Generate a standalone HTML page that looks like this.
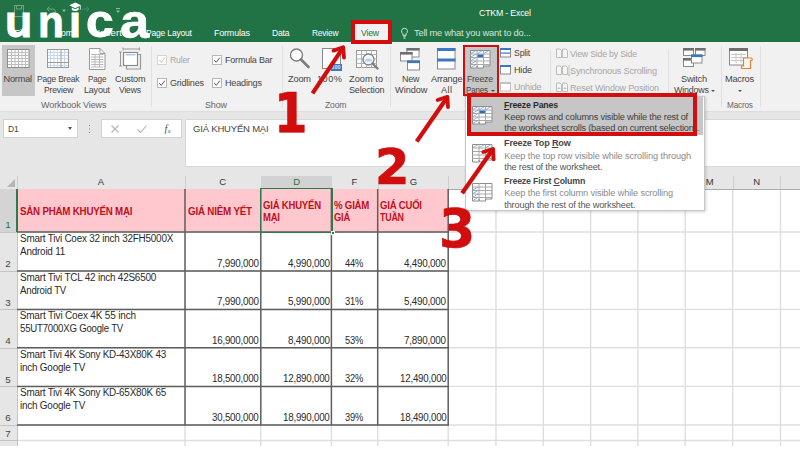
<!DOCTYPE html>
<html><head><meta charset="utf-8"><title>CTKM - Excel</title>
<style>
*{box-sizing:border-box;margin:0;padding:0}
html,body{width:800px;height:450px;overflow:hidden;background:#fff}
body{position:relative;font-family:"Liberation Sans",sans-serif;font-size:9px;color:#444}
.abs{position:absolute}
.t{position:absolute;white-space:pre}
.g{display:inline-block;position:relative;width:0;vertical-align:top;white-space:pre}
u{text-decoration:underline;text-underline-offset:1px}
#green{left:0;top:0;width:800px;height:42px;background:#217346}
#ribbon{left:0;top:42px;width:800px;height:69px;background:#f1f1f1}
#gray{left:0;top:111px;width:800px;height:335px;background:#e6e6e6}
</style></head><body>
<div class="abs" id="green"></div>
<div class="abs" id="ribbon"></div>
<div class="abs" id="gray"></div>
<!--TABS-->
<span class="t" style="left:14.0px;top:27.40px;font-size:9.5px;line-height:12px;color:#fff;letter-spacing:-0.10px;">File</span>
<span class="t" style="left:54.5px;top:27.40px;font-size:9.5px;line-height:12px;color:#fff;letter-spacing:-0.21px;transform-origin:0 50%;transform:scaleX(0.910);">Home</span>
<span class="t" style="left:97.5px;top:27.40px;font-size:9.5px;line-height:12px;color:#fff;letter-spacing:0.15px;">Insert</span>
<span class="t" style="left:146.0px;top:27.40px;font-size:9.5px;line-height:12px;color:#fff;letter-spacing:-0.21px;transform-origin:0 50%;transform:scaleX(0.897);">Page Layout</span>
<span class="t" style="left:214.0px;top:27.40px;font-size:9.5px;line-height:12px;color:#fff;letter-spacing:-0.21px;transform-origin:0 50%;transform:scaleX(0.944);">Formulas</span>
<span class="t" style="left:272.0px;top:27.40px;font-size:9.5px;line-height:12px;color:#fff;letter-spacing:-0.21px;transform-origin:0 50%;transform:scaleX(0.900);">Data</span>
<span class="t" style="left:311.5px;top:27.40px;font-size:9.5px;line-height:12px;color:#fff;letter-spacing:-0.21px;transform-origin:0 50%;transform:scaleX(0.880);">Review</span>
<div class="abs" style="left:351px;top:20px;width:41px;height:22px;background:#f1f1f1"></div>
<span class="t" style="left:360.5px;top:27.40px;font-size:9.5px;line-height:12px;color:#217346;letter-spacing:-0.21px;transform-origin:0 50%;transform:scaleX(0.914);">View</span>
<span class="t" style="left:414.0px;top:27.40px;font-size:9.5px;line-height:12px;color:#d3e5da;letter-spacing:-0.21px;transform-origin:0 50%;transform:scaleX(0.982);">Tell me what you want to do...</span>
<span class="t" style="left:479.0px;top:6.60px;font-size:9.5px;line-height:12px;color:#fff;letter-spacing:-0.21px;transform-origin:0 50%;transform:scaleX(0.924);">CTKM - Excel</span>
<svg class="abs" style="left:400px;top:27px" width="9" height="13" viewBox="0 0 9 13"><path d="M4.5 1.2a3 3 0 0 0-1.6 5.5v1.6h3.2V6.700a3 3 0 0 0-1.6-5.5zM3.200 9.800h2.600M3.600 11.200h1.800" fill="none" stroke="#e3efe8" stroke-width="0.9"/></svg>
<svg class="abs" style="left:12px;top:4px" width="112" height="16" viewBox="0 0 112 16"><g fill="none" stroke="#6fa386" stroke-width="1"><rect x="2.500" y="1.500" width="9" height="11"/><rect x="4.500" y="1.500" width="5" height="3.500"/><path d="M35 5h5.500a3 3 0 0 1 3 3v1M37.500 2.500L35 5l2.500 2.500"/><path d="M77 5h-5.500a3 3 0 0 0-3 3v1M74.500 2.500L77 5l-2.500 2.500" stroke="#4a8a66"/></g><path d="M50 5.500h4l-2 2.500zM104 4h4v1h-4zM104 6.500h4l-2 2.500z" fill="#8fb9a2"/></svg>
<!--RIBBON-->
<div class="abs" style="left:2px;top:45px;width:32.500px;height:50.500px;background:#c6c6c6"></div>
<svg class="abs" style="left:7px;top:49px;" width="23" height="19" viewBox="0 0 23 19"><rect x="0.5" y="0.5" width="21.500" height="18" fill="#fff" stroke="#8c8c8c"/><path d="M4.5 1v17M8 1v17M11.5 1v17M15 1v17M18.5 1v17" stroke="#bdbdbd" stroke-width="1" fill="none"/><path d="M1 3.5h20.500M1 6.5h20.500M1 9.5h20.500M1 12.5h20.500M1 15.5h20.500" stroke="#bdbdbd" stroke-width="1" fill="none"/></svg>
<span class="t" style="left:3.5px;top:72.60px;font-size:9.2px;line-height:12px;color:#444;letter-spacing:-0.20px;">Normal</span>
<svg class="abs" style="left:47px;top:49px;" width="22" height="19" viewBox="0 0 22 19"><rect x="0.5" y="0.5" width="21" height="18" fill="#fff" stroke="#999"/><path d="M3.5 1v17M7 1v17M10.5 1v17M17.5 1v17" stroke="#c3d8f0" stroke-width="1" fill="none"/><path d="M1 3.5h20M1 6.5h20M1 9.5h20M1 16.5h20" stroke="#c3d8f0" stroke-width="1" fill="none"/><path d="M14 1v17M1 13.500h20" stroke="#9a9a9a" stroke-width="1" fill="none"/></svg>
<span class="t" style="left:36.5px;top:72.60px;font-size:9.2px;line-height:12px;color:#444;letter-spacing:-0.20px;transform-origin:0 50%;transform:scaleX(0.920);">Page Break</span>
<span class="t" style="left:43.5px;top:84.40px;font-size:9.2px;line-height:12px;color:#444;letter-spacing:-0.20px;transform-origin:0 50%;transform:scaleX(0.937);">Preview</span>
<svg class="abs" style="left:89px;top:48px;" width="17" height="22" viewBox="0 0 17 22"><path d="M0.500 0.500h10.500l5 5v16h-15.500z" fill="#fff" stroke="#999"/><path d="M11 0.500v5h5" fill="none" stroke="#999"/><path d="M2 6.500h12.500M2 9h12.500M2 11.500h12.500M2 14h12.500M2 16.500h12.500M2 19h12.500M6 6.500v12.500M10.500 6.500v12.500" stroke="#b9b9b9" stroke-width="1" fill="none"/></svg>
<span class="t" style="left:87.5px;top:72.60px;font-size:9.2px;line-height:12px;color:#444;letter-spacing:-0.20px;transform-origin:0 50%;transform:scaleX(0.887);">Page</span>
<span class="t" style="left:84.0px;top:84.40px;font-size:9.2px;line-height:12px;color:#444;letter-spacing:-0.20px;transform-origin:0 50%;transform:scaleX(0.978);">Layout</span>
<svg class="abs" style="left:119px;top:47px;" width="23" height="23" viewBox="0 0 23 23"><path d="M4 2h16.500M4 0.500v3M20.500 0.500v3M1.500 5v14M0 5h3M0 19h3" fill="none" stroke="#999" stroke-width="1"/><path d="M19 7.500h2.500v14.500h-14v-3" fill="none" stroke="#999" stroke-width="1.200"/><rect x="4.500" y="5.500" width="14" height="13" fill="#fff" stroke="#8c8c8c" stroke-width="1.200"/><path d="M6.500 7.800h10" stroke="#9dbde0" stroke-width="1.200"/></svg>
<span class="t" style="left:115.0px;top:72.60px;font-size:9.2px;line-height:12px;color:#444;letter-spacing:-0.20px;transform-origin:0 50%;transform:scaleX(0.995);">Custom</span>
<span class="t" style="left:119.0px;top:84.40px;font-size:9.2px;line-height:12px;color:#444;letter-spacing:-0.20px;transform-origin:0 50%;transform:scaleX(0.935);">Views</span>
<span class="t" style="left:41.0px;top:99.00px;font-size:9px;line-height:12px;color:#666;letter-spacing:-0.09px;">Workbook Views</span>
<div class="abs" style="left:151px;top:46px;width:1px;height:61px;background:#e0e0e0"></div>
<svg class="abs" style="left:157px;top:54.5px;" width="10" height="10" viewBox="0 0 10 10"><rect x="0.5" y="0.5" width="9" height="9" fill="#fdfdfd" stroke="#d6d6d6"/><path d="M2.300 5.200l2 2.100l3.500-4.600" fill="none" stroke="#c4c4c4" stroke-width="1"/></svg>
<span class="t" style="left:170.0px;top:53.50px;font-size:9.2px;line-height:12px;color:#a6a6a6;letter-spacing:-0.20px;transform-origin:0 50%;transform:scaleX(0.945);">Ruler</span>
<svg class="abs" style="left:211.5px;top:54.5px;" width="10" height="10" viewBox="0 0 10 10"><rect x="0.5" y="0.5" width="9" height="9" fill="#fdfdfd" stroke="#b8b8b8"/><path d="M2.300 5.200l2 2.100l3.500-4.600" fill="none" stroke="#5a5a5a" stroke-width="1"/></svg>
<span class="t" style="left:225.0px;top:53.50px;font-size:9.2px;line-height:12px;color:#444;letter-spacing:-0.20px;transform-origin:0 50%;transform:scaleX(0.979);">Formula Bar</span>
<svg class="abs" style="left:157px;top:77.5px;" width="10" height="10" viewBox="0 0 10 10"><rect x="0.5" y="0.5" width="9" height="9" fill="#fdfdfd" stroke="#b8b8b8"/><path d="M2.300 5.200l2 2.100l3.500-4.600" fill="none" stroke="#5a5a5a" stroke-width="1"/></svg>
<span class="t" style="left:170.0px;top:76.50px;font-size:9.2px;line-height:12px;color:#444;letter-spacing:-0.20px;transform-origin:0 50%;transform:scaleX(0.981);">Gridlines</span>
<svg class="abs" style="left:211.5px;top:77.5px;" width="10" height="10" viewBox="0 0 10 10"><rect x="0.5" y="0.5" width="9" height="9" fill="#fdfdfd" stroke="#b8b8b8"/><path d="M2.300 5.200l2 2.100l3.500-4.600" fill="none" stroke="#5a5a5a" stroke-width="1"/></svg>
<span class="t" style="left:225.0px;top:76.50px;font-size:9.2px;line-height:12px;color:#444;letter-spacing:-0.20px;transform-origin:0 50%;transform:scaleX(0.989);">Headings</span>
<span class="t" style="left:205.0px;top:99.00px;font-size:9px;line-height:12px;color:#666;letter-spacing:-0.17px;">Show</span>
<div class="abs" style="left:281.5px;top:46px;width:1px;height:61px;background:#e0e0e0"></div>
<svg class="abs" style="left:288.5px;top:48px;" width="22" height="22" viewBox="0 0 22 22"><circle cx="7.500" cy="7" r="6" fill="#fdfdfd" stroke="#7d7d7d" stroke-width="1.400"/><path d="M12 11.500l7.500 7.500" stroke="#7d7d7d" stroke-width="2.600" stroke-linecap="round"/></svg>
<span class="t" style="left:288.0px;top:72.60px;font-size:9.2px;line-height:12px;color:#444;letter-spacing:-0.17px;">Zoom</span>
<svg class="abs" style="left:322px;top:47.5px;" width="21" height="24" viewBox="0 0 21 24"><rect x="0.5" y="0.5" width="18" height="20" fill="#fff" stroke="#888"/><rect x="9" y="16" width="11" height="7" fill="#3b78c3"/></svg>
<span class="t" style="left:331.5px;top:64.29px;font-size:5.5px;line-height:7px;color:#dbe7f6;font-weight:bold;letter-spacing:-0.09px;">100</span>
<span class="t" style="left:317.0px;top:72.60px;font-size:9.2px;line-height:12px;color:#444;letter-spacing:0.50px;">100%</span>
<svg class="abs" style="left:355.5px;top:49.5px;" width="23" height="21" viewBox="0 0 23 21"><rect x="0.5" y="0.5" width="20" height="17" fill="#fff" stroke="#999"/><path d="M0.500 4.500h20M0.500 9h20M0.500 13.500h20M5.500 0.500v17M10.500 0.500v17M15.500 0.500v17" stroke="#b5b5b5" fill="none"/><circle cx="12.500" cy="9.500" r="5.500" fill="#f4f8fc" stroke="#7d7d7d" stroke-width="1.300"/><path d="M9 11.500a3.500 3 0 0 1 7 0z" fill="#b7d0ec"/><path d="M16.500 13.500l5 5" stroke="#7d7d7d" stroke-width="2.300" stroke-linecap="round"/></svg>
<span class="t" style="left:349.0px;top:72.60px;font-size:9.2px;line-height:12px;color:#444;letter-spacing:0.05px;">Zoom to</span>
<span class="t" style="left:348.5px;top:84.40px;font-size:9.2px;line-height:12px;color:#444;letter-spacing:-0.20px;transform-origin:0 50%;transform:scaleX(0.981);">Selection</span>
<span class="t" style="left:324.5px;top:99.00px;font-size:9px;line-height:12px;color:#666;letter-spacing:-0.20px;transform-origin:0 50%;transform:scaleX(0.959);">Zoom</span>
<div class="abs" style="left:389.5px;top:46px;width:1px;height:61px;background:#e0e0e0"></div>
<svg class="abs" style="left:400px;top:47.5px;" width="21" height="23" viewBox="0 0 21 23"><rect x="7" y="0.5" width="12" height="8.5" fill="#fff" stroke="#8a8a8a"/><rect x="6.5" y="0" width="13" height="2.600" fill="#6e6e6e"/><rect x="0.5" y="4.5" width="11.5" height="8.5" fill="#fff" stroke="#8a8a8a"/><rect x="0" y="4" width="12.5" height="2.600" fill="#6e6e6e"/><rect x="7.5" y="13" width="12" height="9" fill="#fff" stroke="#8a8a8a"/><rect x="7" y="12.5" width="13" height="2.600" fill="#3b78c3"/></svg>
<span class="t" style="left:402.0px;top:72.60px;font-size:9.2px;line-height:12px;color:#444;letter-spacing:-0.20px;transform-origin:0 50%;transform:scaleX(0.973);">New</span>
<span class="t" style="left:395.0px;top:84.40px;font-size:9.2px;line-height:12px;color:#444;letter-spacing:-0.04px;">Window</span>
<svg class="abs" style="left:437px;top:47.5px;" width="19" height="22" viewBox="0 0 19 22"><rect x="0.5" y="0.5" width="17.500" height="20.500" fill="#fff" stroke="#8a8a8a"/><rect x="0" y="0" width="18.500" height="3" fill="#3b78c3"/><rect x="0" y="10.500" width="18.500" height="3" fill="#3b78c3"/></svg>
<span class="t" style="left:431.0px;top:72.60px;font-size:9.2px;line-height:12px;color:#444;letter-spacing:-0.20px;">Arrange</span>
<span class="t" style="left:441.0px;top:84.40px;font-size:9.2px;line-height:12px;color:#444;letter-spacing:0.39px;">All</span>
<div class="abs" style="left:463.500px;top:44.500px;width:35.500px;height:52px;background:#c6c6c6"></div>
<svg class="abs" style="left:470px;top:49.5px;" width="21" height="19" viewBox="0 0 21 19"><path d="M0.500 0.500h19.500v15.500h-6.500v2h-6v-2h-0.500v2h-6.500z" fill="#fff" stroke="#8c8c8c"/><path d="M0.500 4h19.500M0.500 7.500h19.500M0.500 11h19.500M0.500 14.500h19.500M7 0.500v17M13.500 0.500v15.500" stroke="#a9a9a9" fill="none"/><path d="M1 3.500l5-3M7.500 3.500l5-3M14 3.500l5-3" stroke="#6f9fd8" stroke-width="0.800" fill="none"/><path d="M1 7l5-3M1 10.500l5-3M1 14l5-3M1 17.500l5-3" stroke="#6f9fd8" stroke-width="0.800" fill="none"/><rect x="7.500" y="4.500" width="5.500" height="2.600" fill="#2e6fbf"/></svg>
<span class="t" style="left:467.0px;top:72.60px;font-size:9.2px;line-height:12px;color:#444;letter-spacing:-0.20px;transform-origin:0 50%;transform:scaleX(0.942);">Freeze</span>
<span class="t" style="left:466.0px;top:84.40px;font-size:9.2px;line-height:12px;color:#444;letter-spacing:-0.20px;transform-origin:0 50%;transform:scaleX(0.871);">Panes</span>
<div class="abs" style="left:490.500px;top:89.500px;border:2.300px solid transparent;border-top:2.600px solid #444;border-bottom:0"></div>
<svg class="abs" style="left:499.5px;top:48px;" width="12" height="10" viewBox="0 0 12 10"><rect x="0.5" y="0.5" width="10" height="8.500" fill="#fdfdfd" stroke="#8a8a8a"/><rect x="0" y="0" width="11" height="2" fill="#3b78c3"/><rect x="1" y="4.500" width="9" height="1.200" fill="#3b78c3"/></svg>
<span class="t" style="left:513.5px;top:47.30px;font-size:9.2px;line-height:12px;color:#444;letter-spacing:-0.20px;transform-origin:0 50%;transform:scaleX(0.949);">Split</span>
<svg class="abs" style="left:499.5px;top:65px;" width="12" height="10" viewBox="0 0 12 10"><rect x="0.5" y="0.5" width="10" height="8.500" fill="#fdfdfd" stroke="#8a8a8a"/><rect x="0" y="0" width="11" height="2" fill="#3b78c3"/></svg>
<span class="t" style="left:513.5px;top:64.20px;font-size:9.2px;line-height:12px;color:#444;letter-spacing:-0.20px;transform-origin:0 50%;transform:scaleX(0.984);">Hide</span>
<svg class="abs" style="left:499.5px;top:82px;" width="12" height="10" viewBox="0 0 12 10"><rect x="0.5" y="0.5" width="10" height="8.500" fill="#fdfdfd" stroke="#c2c2c2"/><rect x="0" y="0" width="11" height="2" fill="#c2c2c2"/></svg>
<span class="t" style="left:513.5px;top:81.20px;font-size:9.2px;line-height:12px;color:#a6a6a6;letter-spacing:-0.20px;transform-origin:0 50%;transform:scaleX(0.978);">Unhide</span>
<div class="abs" style="left:549.5px;top:50px;width:1px;height:57px;background:#e0e0e0"></div>
<svg class="abs" style="left:555.5px;top:47.5px;" width="15" height="12" viewBox="0 0 15 12"><path d="M0.500 1h3.500l1.500 1.500v7h-5zM6.500 1h3.500l1.500 1.500v7h-5z" fill="#f6f6f6" stroke="#bdbdbd"/></svg>
<span class="t" style="left:570.0px;top:47.60px;font-size:9.2px;line-height:12px;color:#a6a6a6;letter-spacing:-0.20px;transform-origin:0 50%;transform:scaleX(0.948);">View Side by Side</span>
<svg class="abs" style="left:555.5px;top:64.5px;" width="15" height="12" viewBox="0 0 15 12"><path d="M0.500 1h3.500l1.500 1.500v7h-5zM6.500 1h3.500l1.500 1.500v7h-5z" fill="#f6f6f6" stroke="#bdbdbd"/><path d="M13 0v11M12 9.500l1 1.500l1-1.500" stroke="#bdbdbd" fill="none" stroke-width="0.800"/></svg>
<span class="t" style="left:570.0px;top:64.50px;font-size:9.2px;line-height:12px;color:#a6a6a6;letter-spacing:-0.20px;transform-origin:0 50%;transform:scaleX(0.996);">Synchronous Scrolling</span>
<svg class="abs" style="left:555.5px;top:81.5px;" width="15" height="12" viewBox="0 0 15 12"><path d="M0.500 1h3.500l1.500 1.500v7h-5zM6.500 1h3.500l1.500 1.500v7h-5z" fill="#f6f6f6" stroke="#bdbdbd"/><path d="M1.500 6.500h3M7.500 6.500h3M3 5v1.500M9 5v1.500" stroke="#bdbdbd" fill="none" stroke-width="0.800"/></svg>
<span class="t" style="left:570.0px;top:81.50px;font-size:9.2px;line-height:12px;color:#a6a6a6;letter-spacing:-0.20px;transform-origin:0 50%;transform:scaleX(0.984);">Reset Window Position</span>
<div class="abs" style="left:668px;top:50px;width:1px;height:46px;background:#e0e0e0"></div>
<svg class="abs" style="left:683px;top:48px;" width="23" height="20" viewBox="0 0 23 20"><rect x="0.5" y="0.5" width="10" height="7" fill="#fff" stroke="#8a8a8a"/><rect x="0" y="0" width="11" height="2.600" fill="#6e6e6e"/><rect x="12.5" y="0.5" width="9.5" height="7" fill="#fff" stroke="#8a8a8a"/><rect x="12" y="0" width="10.5" height="2.600" fill="#6e6e6e"/><rect x="0.5" y="10.5" width="10" height="8" fill="#fff" stroke="#8a8a8a"/><rect x="0" y="10" width="11" height="2.600" fill="#6e6e6e"/><rect x="8.5" y="7" width="10.5" height="8" fill="#fff" stroke="#8a8a8a"/><rect x="8" y="6.5" width="11.5" height="2.600" fill="#3b78c3"/></svg>
<span class="t" style="left:681.0px;top:72.60px;font-size:9.2px;line-height:12px;color:#444;letter-spacing:-0.20px;">Switch</span>
<span class="t" style="left:674.0px;top:84.40px;font-size:9.2px;line-height:12px;color:#444;letter-spacing:-0.20px;transform-origin:0 50%;transform:scaleX(0.970);">Windows</span>
<div class="abs" style="left:711px;top:89.500px;border:2.300px solid transparent;border-top:2.600px solid #555;border-bottom:0"></div>
<div class="abs" style="left:720.5px;top:46px;width:1px;height:61px;background:#e0e0e0"></div>
<svg class="abs" style="left:729px;top:48px;" width="25" height="22" viewBox="0 0 25 22"><rect x="0.5" y="0.5" width="18" height="16.500" fill="#fff" stroke="#8a8a8a"/><rect x="0" y="0" width="19" height="3" fill="#6e6e6e"/><path d="M2 6.500h15M2 9.500h15M2 12.500h15M7 5v10M12 5v10" stroke="#c9c9c9" fill="none"/><path d="M14.500 10h7.500a1.200 1.200 0 0 1 0 2.500h-0.500v8h-8a1.200 1.200 0 0 1 0-2.500h1z" fill="#f6f6f6" stroke="#e8812a" stroke-width="1.200"/></svg>
<span class="t" style="left:725.0px;top:72.60px;font-size:9.2px;line-height:12px;color:#444;letter-spacing:-0.20px;">Macros</span>
<div class="abs" style="left:737.500px;top:89.500px;border:2.300px solid transparent;border-top:2.600px solid #555;border-bottom:0"></div>
<span class="t" style="left:727.0px;top:99.00px;font-size:9px;line-height:12px;color:#666;letter-spacing:-0.20px;transform-origin:0 50%;transform:scaleX(0.911);">Macros</span>
<div class="abs" style="left:759.5px;top:46px;width:1px;height:61px;background:#e0e0e0"></div>
<!--FORMULA-->
<div class="abs" style="left:0;top:111px;width:800px;height:1px;background:#dedede"></div>
<div class="abs" style="left:2.500px;top:118.500px;width:75px;height:19px;background:#fff;border:1px solid #d2d2d2"></div>
<span class="t" style="left:8.0px;top:123.00px;font-size:9.5px;line-height:12px;color:#444;letter-spacing:-0.21px;transform-origin:0 50%;transform:scaleX(0.896);">D1</span>
<div class="abs" style="left:67.500px;top:126.500px;border:2.500px solid transparent;border-top:3px solid #555;border-bottom:0"></div>
<div class="abs" style="left:88.500px;top:124.500px;width:1px;height:1px;background:#888;box-shadow:0 3.500px 0 #888,0 7px 0 #888"></div>
<div class="abs" style="left:100.500px;top:118.500px;width:81px;height:19px;background:#fff;border:1px solid #d2d2d2"></div>
<svg class="abs" style="left:110.5px;top:124.5px;" width="8" height="8" viewBox="0 0 8 8"><path d="M0.500 0.500l7 7M7.500 0.500l-7 7" stroke="#b5b5b5" stroke-width="1.100" fill="none"/></svg>
<svg class="abs" style="left:136.5px;top:124.5px;" width="10" height="8" viewBox="0 0 10 8"><path d="M0.500 4.500l3 3l6-7" stroke="#b5b5b5" stroke-width="1.100" fill="none"/></svg>
<span class="t" style="left:164.5px;top:122.00px;font-size:10.5px;line-height:14px;color:#555;font-family:'Liberation Serif',serif;font-style:italic;">f<span style="font-size:6.500px;position:relative;top:1.200px;left:0.300px">x</span></span>
<div class="abs" style="left:184.500px;top:118.500px;width:616px;height:48.500px;background:#fff;border:1px solid #d8d8d8;border-right:0"></div>
<span class="t" style="left:193.0px;top:122.80px;font-size:9.5px;line-height:12px;color:#444;letter-spacing:-0.19px;">GIÁ KHUYẾN MẠI</span>
<!--SHEET-->
<div class="abs" style="left:17px;top:189px;width:783px;height:257px;background:#fff"></div>
<svg class="abs" style="left:0;top:0" width="800" height="450" viewBox="0 0 800 450"><path d="M496 189V446M543.3 189V446M590.6 189V446M637.9 189V446M685.2 189V446M732.7 189V446M780.5 189V446M185 425V446M260.8 425V446M331.4 425V446M377.7 425V446M448.2 425V446M17 232H800M17 271H800M17 309.4H800M17 347.8H800M17 386.4H800M17 425H800M17 440.5H800" stroke="#dedede" stroke-width="1.400" fill="none"/></svg>
<div class="abs" style="left:0;top:175px;width:800px;height:14px;background:#e6e6e6"></div>
<div class="abs" style="left:0;top:188.500px;width:800px;height:1px;background:#ababab"></div>
<div class="abs" style="left:16.5px;top:175.500px;width:1px;height:13px;background:#cdcdcd"></div>
<div class="abs" style="left:184.5px;top:175.500px;width:1px;height:13px;background:#cdcdcd"></div>
<div class="abs" style="left:260.5px;top:175.500px;width:1px;height:13px;background:#cdcdcd"></div>
<div class="abs" style="left:330.5px;top:175.500px;width:1px;height:13px;background:#cdcdcd"></div>
<div class="abs" style="left:377.5px;top:175.500px;width:1px;height:13px;background:#cdcdcd"></div>
<div class="abs" style="left:447.5px;top:175.500px;width:1px;height:13px;background:#cdcdcd"></div>
<div class="abs" style="left:495.5px;top:175.500px;width:1px;height:13px;background:#cdcdcd"></div>
<div class="abs" style="left:542.5px;top:175.500px;width:1px;height:13px;background:#cdcdcd"></div>
<div class="abs" style="left:590.5px;top:175.500px;width:1px;height:13px;background:#cdcdcd"></div>
<div class="abs" style="left:637.5px;top:175.500px;width:1px;height:13px;background:#cdcdcd"></div>
<div class="abs" style="left:684.5px;top:175.500px;width:1px;height:13px;background:#cdcdcd"></div>
<div class="abs" style="left:732.5px;top:175.500px;width:1px;height:13px;background:#cdcdcd"></div>
<div class="abs" style="left:779.5px;top:175.500px;width:1px;height:13px;background:#cdcdcd"></div>
<div class="abs" style="left:260.500px;top:175.500px;width:71.500px;height:13px;background:#d2d2d2"></div>
<span class="t" style="left:97.8px;top:176.30px;font-size:9.5px;line-height:12px;color:#333;width:6.400px;text-align:center;">A</span>
<span class="t" style="left:219.3px;top:176.30px;font-size:9.5px;line-height:12px;color:#333;width:6.400px;text-align:center;">C</span>
<span class="t" style="left:351.3px;top:176.30px;font-size:9.5px;line-height:12px;color:#333;width:6.400px;text-align:center;">F</span>
<span class="t" style="left:409.8px;top:176.30px;font-size:9.5px;line-height:12px;color:#333;width:6.400px;text-align:center;">G</span>
<span class="t" style="left:705.7px;top:176.30px;font-size:9.5px;line-height:12px;color:#333;width:6.400px;text-align:center;">M</span>
<span class="t" style="left:753.3px;top:176.30px;font-size:9.5px;line-height:12px;color:#333;width:6.400px;text-align:center;">N</span>
<span class="t" style="left:293.3px;top:176.30px;font-size:9.5px;line-height:12px;color:#217346;width:6.400px;text-align:center;">D</span>
<div class="abs" style="left:6.500px;top:178.500px;border-left:8.500px solid transparent;border-bottom:8.500px solid #b4b4b4"></div>
<div class="abs" style="left:0;top:189px;width:16.500px;height:257px;background:#e6e6e6"></div>
<div class="abs" style="left:0;top:189px;width:16.500px;height:43px;background:#d4d4d4"></div>
<div class="abs" style="left:0;top:231.5px;width:17px;height:1px;background:#c4c4c4"></div>
<div class="abs" style="left:0;top:270.5px;width:17px;height:1px;background:#c4c4c4"></div>
<div class="abs" style="left:0;top:309px;width:17px;height:1px;background:#c4c4c4"></div>
<div class="abs" style="left:0;top:347.5px;width:17px;height:1px;background:#c4c4c4"></div>
<div class="abs" style="left:0;top:386px;width:17px;height:1px;background:#c4c4c4"></div>
<div class="abs" style="left:0;top:424.5px;width:17px;height:1px;background:#c4c4c4"></div>
<div class="abs" style="left:0;top:440px;width:17px;height:1px;background:#c4c4c4"></div>
<div class="abs" style="left:16.500px;top:232px;width:1px;height:214px;background:#c4c4c4"></div>
<div class="abs" style="left:16.300px;top:188.500px;width:1.700px;height:43.500px;background:#2a7b4f"></div>
<span class="t" style="left:5.2px;top:218.00px;font-size:9.8px;line-height:13px;color:#217346;">1</span>
<span class="t" style="left:5.2px;top:257.00px;font-size:9.8px;line-height:13px;color:#444;">2</span>
<span class="t" style="left:5.2px;top:295.50px;font-size:9.8px;line-height:13px;color:#444;">3</span>
<span class="t" style="left:5.2px;top:334.00px;font-size:9.8px;line-height:13px;color:#444;">4</span>
<span class="t" style="left:5.2px;top:372.50px;font-size:9.8px;line-height:13px;color:#444;">5</span>
<span class="t" style="left:5.2px;top:411.00px;font-size:9.8px;line-height:13px;color:#444;">6</span>
<span class="t" style="left:5.2px;top:426.50px;font-size:9.8px;line-height:13px;color:#444;">7</span>
<span class="t" style="left:5.2px;top:441.70px;font-size:9.8px;line-height:13px;color:#444;">8</span>
<div class="abs" style="left:18px;top:189px;width:430px;height:43px;background:#ffc7ce"></div>
<svg class="abs" style="left:0;top:0" width="800" height="450" viewBox="0 0 800 450"><path d="M185 189V425.500M260.8 189V425.500M331.4 189V425.500M377.7 189V425.500M448.2 189V425.500M17 232H449M17 271H449M17 309.4H449M17 347.8H449M17 386.4H449M17 425H449" stroke="#5e5e5e" stroke-width="1.500" fill="none"/></svg>
<div class="abs" style="left:259.500px;top:188px;width:73.500px;height:45px;border:1.500px solid #2a7b4f"></div>
<div class="abs" style="left:330.500px;top:230.500px;width:4px;height:4px;background:#2a7b4f;border:0.500px solid #fff"></div>
<span class="t" style="left:20.0px;top:205.00px;font-size:10.2px;line-height:13px;color:#c0101a;font-weight:bold;letter-spacing:-0.22px;transform-origin:0 50%;transform:scaleX(0.956);">SẢN PHẨM KHUYẾN MẠI</span>
<span class="t" style="left:187.7px;top:205.00px;font-size:10.2px;line-height:13px;color:#c0101a;font-weight:bold;letter-spacing:-0.22px;transform-origin:0 50%;transform:scaleX(0.965);">GIÁ NIÊM YẾT</span>
<span class="t" style="left:263.0px;top:198.80px;font-size:10.2px;line-height:13px;color:#c0101a;font-weight:bold;letter-spacing:-0.22px;transform-origin:0 50%;transform:scaleX(0.936);">GIÁ KHUYẾN</span>
<span class="t" style="left:263.0px;top:211.20px;font-size:10.2px;line-height:13px;color:#c0101a;font-weight:bold;letter-spacing:-0.22px;transform-origin:0 50%;transform:scaleX(0.932);">MẠI</span>
<span class="t" style="left:333.6px;top:198.80px;font-size:10.2px;line-height:13px;color:#c0101a;font-weight:bold;letter-spacing:-0.22px;transform-origin:0 50%;transform:scaleX(0.947);">% GIẢM</span>
<span class="t" style="left:333.6px;top:211.20px;font-size:10.2px;line-height:13px;color:#c0101a;font-weight:bold;letter-spacing:-0.22px;transform-origin:0 50%;transform:scaleX(0.916);">GIÁ</span>
<span class="t" style="left:380.0px;top:198.80px;font-size:10.2px;line-height:13px;color:#c0101a;font-weight:bold;letter-spacing:-0.22px;transform-origin:0 50%;transform:scaleX(0.936);">GIÁ CUỐI</span>
<span class="t" style="left:380.0px;top:211.20px;font-size:10.2px;line-height:13px;color:#c0101a;font-weight:bold;letter-spacing:-0.22px;transform-origin:0 50%;transform:scaleX(0.869);">TUẦN</span>
<span class="t" style="left:19.7px;top:231.60px;font-size:10px;line-height:13px;color:#2a2a2a;letter-spacing:-0.22px;transform-origin:0 50%;transform:scaleX(0.991);">Smart Tivi Coex 32 inch 32FH5000X</span>
<span class="t" style="left:19.7px;top:244.60px;font-size:10px;line-height:13px;color:#2a2a2a;letter-spacing:-0.22px;transform-origin:0 50%;transform:scaleX(0.992);">Android 11</span>
<span class="t" style="left:216.8px;top:256.70px;font-size:10px;line-height:13px;color:#2a2a2a;letter-spacing:-0.22px;transform-origin:0 50%;transform:scaleX(0.983);">7,990,000</span>
<span class="t" style="left:287.8px;top:256.70px;font-size:10px;line-height:13px;color:#2a2a2a;letter-spacing:-0.22px;transform-origin:0 50%;transform:scaleX(0.983);">4,990,000</span>
<span class="t" style="left:404.3px;top:256.70px;font-size:10px;line-height:13px;color:#2a2a2a;letter-spacing:-0.22px;transform-origin:0 50%;transform:scaleX(0.983);">4,490,000</span>
<span class="t" style="left:344.8px;top:256.70px;font-size:10px;line-height:13px;color:#2a2a2a;letter-spacing:-0.22px;transform-origin:0 50%;transform:scaleX(0.930);">44%</span>
<span class="t" style="left:19.7px;top:270.60px;font-size:10px;line-height:13px;color:#2a2a2a;letter-spacing:-0.22px;transform-origin:0 50%;transform:scaleX(0.995);">Smart Tivi TCL 42 inch 42S6500</span>
<span class="t" style="left:19.7px;top:283.60px;font-size:10px;line-height:13px;color:#2a2a2a;letter-spacing:-0.22px;transform-origin:0 50%;transform:scaleX(0.967);">Android TV</span>
<span class="t" style="left:216.8px;top:295.20px;font-size:10px;line-height:13px;color:#2a2a2a;letter-spacing:-0.22px;transform-origin:0 50%;transform:scaleX(0.983);">7,990,000</span>
<span class="t" style="left:287.8px;top:295.20px;font-size:10px;line-height:13px;color:#2a2a2a;letter-spacing:-0.22px;transform-origin:0 50%;transform:scaleX(0.983);">5,990,000</span>
<span class="t" style="left:404.3px;top:295.20px;font-size:10px;line-height:13px;color:#2a2a2a;letter-spacing:-0.22px;transform-origin:0 50%;transform:scaleX(0.983);">5,490,000</span>
<span class="t" style="left:344.8px;top:295.20px;font-size:10px;line-height:13px;color:#2a2a2a;letter-spacing:-0.22px;transform-origin:0 50%;transform:scaleX(0.930);">31%</span>
<span class="t" style="left:19.7px;top:309.10px;font-size:10px;line-height:13px;color:#2a2a2a;letter-spacing:-0.17px;">Smart Tivi Coex 4K 55 inch</span>
<span class="t" style="left:19.7px;top:322.10px;font-size:10px;line-height:13px;color:#2a2a2a;letter-spacing:-0.22px;transform-origin:0 50%;transform:scaleX(0.962);">55UT7000XG Google TV</span>
<span class="t" style="left:212.0px;top:333.70px;font-size:10px;line-height:13px;color:#2a2a2a;letter-spacing:-0.22px;transform-origin:0 50%;transform:scaleX(0.973);">16,900,000</span>
<span class="t" style="left:287.8px;top:333.70px;font-size:10px;line-height:13px;color:#2a2a2a;letter-spacing:-0.22px;transform-origin:0 50%;transform:scaleX(0.983);">8,490,000</span>
<span class="t" style="left:404.3px;top:333.70px;font-size:10px;line-height:13px;color:#2a2a2a;letter-spacing:-0.22px;transform-origin:0 50%;transform:scaleX(0.983);">7,890,000</span>
<span class="t" style="left:344.8px;top:333.70px;font-size:10px;line-height:13px;color:#2a2a2a;letter-spacing:-0.22px;transform-origin:0 50%;transform:scaleX(0.930);">53%</span>
<span class="t" style="left:19.7px;top:347.60px;font-size:10px;line-height:13px;color:#2a2a2a;letter-spacing:-0.22px;transform-origin:0 50%;transform:scaleX(0.989);">Smart Tivi 4K Sony KD-43X80K 43</span>
<span class="t" style="left:19.7px;top:360.60px;font-size:10px;line-height:13px;color:#2a2a2a;letter-spacing:-0.22px;transform-origin:0 50%;transform:scaleX(0.991);">inch Google TV</span>
<span class="t" style="left:212.0px;top:372.20px;font-size:10px;line-height:13px;color:#2a2a2a;letter-spacing:-0.22px;transform-origin:0 50%;transform:scaleX(0.973);">18,500,000</span>
<span class="t" style="left:283.0px;top:372.20px;font-size:10px;line-height:13px;color:#2a2a2a;letter-spacing:-0.22px;transform-origin:0 50%;transform:scaleX(0.973);">12,890,000</span>
<span class="t" style="left:399.5px;top:372.20px;font-size:10px;line-height:13px;color:#2a2a2a;letter-spacing:-0.22px;transform-origin:0 50%;transform:scaleX(0.973);">12,490,000</span>
<span class="t" style="left:344.8px;top:372.20px;font-size:10px;line-height:13px;color:#2a2a2a;letter-spacing:-0.22px;transform-origin:0 50%;transform:scaleX(0.930);">32%</span>
<span class="t" style="left:19.7px;top:386.10px;font-size:10px;line-height:13px;color:#2a2a2a;letter-spacing:-0.22px;transform-origin:0 50%;transform:scaleX(0.989);">Smart Tivi 4K Sony KD-65X80K 65</span>
<span class="t" style="left:19.7px;top:399.10px;font-size:10px;line-height:13px;color:#2a2a2a;letter-spacing:-0.22px;transform-origin:0 50%;transform:scaleX(0.991);">inch Google TV</span>
<span class="t" style="left:212.0px;top:410.70px;font-size:10px;line-height:13px;color:#2a2a2a;letter-spacing:-0.22px;transform-origin:0 50%;transform:scaleX(0.973);">30,500,000</span>
<span class="t" style="left:283.0px;top:410.70px;font-size:10px;line-height:13px;color:#2a2a2a;letter-spacing:-0.22px;transform-origin:0 50%;transform:scaleX(0.973);">18,990,000</span>
<span class="t" style="left:399.5px;top:410.70px;font-size:10px;line-height:13px;color:#2a2a2a;letter-spacing:-0.22px;transform-origin:0 50%;transform:scaleX(0.973);">18,490,000</span>
<span class="t" style="left:344.8px;top:410.70px;font-size:10px;line-height:13px;color:#2a2a2a;letter-spacing:-0.22px;transform-origin:0 50%;transform:scaleX(0.930);">39%</span>
<!--MENU-->
<div class="abs" style="left:464.500px;top:96px;width:240px;height:115px;background:#fff;border:1px solid #c6c6c6;box-shadow:1px 1px 3px rgba(0,0,0,0.18)"></div>
<div class="abs" style="left:466.500px;top:97px;width:236px;height:38px;background:#c6c6c6"></div>
<svg class="abs" style="left:471.5px;top:106px;" width="21" height="19" viewBox="0 0 21 19"><path d="M0.500 0.500h19.500v15.500h-6.500v2h-6v-2h-0.500v2h-6.500z" fill="#fff" stroke="#8c8c8c"/><path d="M0.500 4h19.500M0.500 7.500h19.500M0.500 11h19.500M0.500 14.500h19.500M7 0.500v17M13.500 0.500v15.500" stroke="#a9a9a9" fill="none"/><path d="M1 3.500l5-3M7.500 3.500l5-3M14 3.500l5-3" stroke="#6f9fd8" stroke-width="0.800" fill="none"/><path d="M1 7l5-3M1 10.500l5-3M1 14l5-3M1 17.500l5-3" stroke="#6f9fd8" stroke-width="0.800" fill="none"/><rect x="7.500" y="4.500" width="5.500" height="2.600" fill="#2e6fbf"/></svg>
<svg class="abs" style="left:471.5px;top:144px;" width="21" height="19" viewBox="0 0 21 19"><path d="M0.500 0.500h19.500v15.500h-6.500v2h-6v-2h-0.500v2h-6.500z" fill="#fff" stroke="#8c8c8c"/><path d="M0.500 4h19.500M0.500 7.500h19.500M0.500 11h19.500M0.500 14.500h19.500M7 0.500v17M13.500 0.500v15.500" stroke="#a9a9a9" fill="none"/><path d="M1 3.500l5-3M7.500 3.500l5-3M14 3.500l5-3" stroke="#6f9fd8" stroke-width="0.800" fill="none"/></svg>
<svg class="abs" style="left:471.5px;top:182.5px;" width="21" height="19" viewBox="0 0 21 19"><path d="M0.500 0.500h19.500v15.500h-6.500v2h-6v-2h-0.500v2h-6.500z" fill="#fff" stroke="#8c8c8c"/><path d="M0.500 4h19.500M0.500 7.500h19.500M0.500 11h19.500M0.500 14.500h19.500M7 0.500v17M13.500 0.500v15.500" stroke="#a9a9a9" fill="none"/><path d="M1 7l5-3M1 10.500l5-3M1 14l5-3M1 17.500l5-3" stroke="#6f9fd8" stroke-width="0.800" fill="none"/></svg>
<span class="t" style="left:504.3px;top:98.80px;font-size:9.2px;line-height:12px;color:#2b2b2b;font-weight:bold;letter-spacing:-0.20px;transform-origin:0 50%;transform:scaleX(0.957);"><u>F</u>reeze Panes</span>
<span class="t" style="left:504.3px;top:111.10px;font-size:9.2px;line-height:12px;color:#3c3c3c;letter-spacing:-0.20px;">Keep rows and columns visible while the rest of</span>
<span class="t" style="left:504.3px;top:122.30px;font-size:9.2px;line-height:12px;color:#3c3c3c;letter-spacing:-0.20px;">the worksheet scrolls (based on current selection).</span>
<span class="t" style="left:504.3px;top:136.70px;font-size:9.2px;line-height:12px;color:#484848;font-weight:bold;letter-spacing:-0.20px;transform-origin:0 50%;transform:scaleX(0.994);">Freeze Top <u>R</u>ow</span>
<span class="t" style="left:504.3px;top:149.60px;font-size:9.2px;line-height:12px;color:#8a8a8a;letter-spacing:-0.09px;">Keep the top row visible while scrolling through</span>
<span class="t" style="left:504.3px;top:161.20px;font-size:9.2px;line-height:12px;color:#555;letter-spacing:-0.20px;">the rest of the worksheet.</span>
<span class="t" style="left:504.3px;top:174.60px;font-size:9.2px;line-height:12px;color:#484848;font-weight:bold;letter-spacing:-0.20px;transform-origin:0 50%;transform:scaleX(0.960);">Freeze First <u>C</u>olumn</span>
<span class="t" style="left:504.3px;top:187.20px;font-size:9.2px;line-height:12px;color:#8a8a8a;letter-spacing:-0.12px;">Keep the first column visible while scrolling</span>
<span class="t" style="left:504.3px;top:199.00px;font-size:9.2px;line-height:12px;color:#555;letter-spacing:-0.17px;">through the rest of the worksheet.</span>
<!--ANNOT-->
<div class="abs" style="left:351px;top:20px;width:41px;height:24.4px;border:4px solid #d10d0d"></div>
<div class="abs" style="left:463px;top:44.5px;width:36px;height:51.5px;border:2.2px solid #d10d0d"></div>
<div class="abs" style="left:467.2px;top:93.2px;width:230.1px;height:42.4px;border:4.6px solid #d10d0d"></div>
<svg class="abs" style="left:0;top:0" width="800" height="450" viewBox="0 0 800 450"><path d="M312.5 93.3L342.4 48.6" fill="none" stroke="#d10d0d" stroke-width="4.2"/><path d="M333.5 50.6L343.2 47.3L344.0 57.6" fill="none" stroke="#d10d0d" stroke-width="3.8" stroke-linecap="round" stroke-linejoin="round"/><path d="M416.7 141.5L446.6 98.2" fill="none" stroke="#d10d0d" stroke-width="4.2"/><path d="M437.6 100.0L447.4 96.9L448.0 107.2" fill="none" stroke="#d10d0d" stroke-width="3.8" stroke-linecap="round" stroke-linejoin="round"/><path d="M462.1 193.3L492.2 150.2" fill="none" stroke="#d10d0d" stroke-width="4.2"/><path d="M483.3 152.0L493.1 149.0L493.6 159.3" fill="none" stroke="#d10d0d" stroke-width="3.8" stroke-linecap="round" stroke-linejoin="round"/></svg>
<span class="t" style="left:274.06px;top:85.95px;font-family:'DejaVu Sans',sans-serif;font-weight:bold;font-size:54.76px;line-height:54.76px;color:#d10d0d;-webkit-text-stroke:0.70px #d10d0d;transform-origin:0 0;transform:scaleX(0.880)">1</span>
<span class="t" style="left:374.78px;top:143.23px;font-family:'DejaVu Sans',sans-serif;font-weight:bold;font-size:49.63px;line-height:49.63px;color:#d10d0d;-webkit-text-stroke:0.70px #d10d0d;transform-origin:0 0;transform:scaleX(0.998)">2</span>
<span class="t" style="left:438.87px;top:203.03px;font-family:'DejaVu Sans',sans-serif;font-weight:bold;font-size:52.80px;line-height:52.80px;color:#d10d0d;-webkit-text-stroke:0.70px #d10d0d;transform-origin:0 0;transform:scaleX(0.988)">3</span>
<!--LOGO-->
<div class="abs" style="left:0;top:0;width:200px;height:48px;font-size:0;line-height:0;white-space:nowrap"><span class="g" style="left:4.68px;top:-0.17px;font-family:'Liberation Sans',sans-serif;font-weight:bold;font-size:44.54px;line-height:44.54px;color:#fff;-webkit-text-stroke:0.90px #fff;transform-origin:0 0;transform:scaleX(1.002)">u</span><span class="g" style="left:37.63px;top:-0.27px;font-family:'Liberation Sans',sans-serif;font-weight:bold;font-size:43.85px;line-height:43.85px;color:#fff;-webkit-text-stroke:0.90px #fff;transform-origin:0 0;transform:scaleX(0.964)">n</span><span class="g" style="left:69.18px;top:-0.27px;font-family:'Liberation Sans',sans-serif;font-weight:bold;font-size:44.89px;line-height:44.89px;color:#fff;-webkit-text-stroke:0.90px #fff;transform-origin:0 0;transform:scaleX(0.974)">i</span><span class="g" style="left:85.54px;top:-2.23px;font-family:'Liberation Sans',sans-serif;font-weight:bold;font-size:46.95px;line-height:46.95px;color:#fff;-webkit-text-stroke:0.90px #fff;transform-origin:0 0;transform:scaleX(1.058)">c</span><span class="g" style="left:120.04px;top:-2.48px;font-family:'Liberation Sans',sans-serif;font-weight:bold;font-size:47.62px;line-height:47.62px;color:#fff;-webkit-text-stroke:0.50px #fff;transform-origin:0 0;transform:scaleX(1.108)">a</span></div>
<div class="abs" style="left:69px;top:0;width:12.500px;height:11.600px;background:#217346"></div>
<svg class="abs" style="left:68.5px;top:1.5px;" width="13" height="10" viewBox="0 0 13 10"><path d="M0.300 3.300L6.200 0.400l5.900 2.900l-5.900 2.900z" fill="#fff"/><path d="M2.800 5.500v2.400q3.400 2 6.800 0v-2.400l-3.400 1.700z" fill="#fff"/><path d="M11.300 3.600v4.200" stroke="#fff" stroke-width="0.800"/></svg>
<div class="abs" style="left:0;top:446px;width:800px;height:4px;background:#fff"></div>
</body></html>
